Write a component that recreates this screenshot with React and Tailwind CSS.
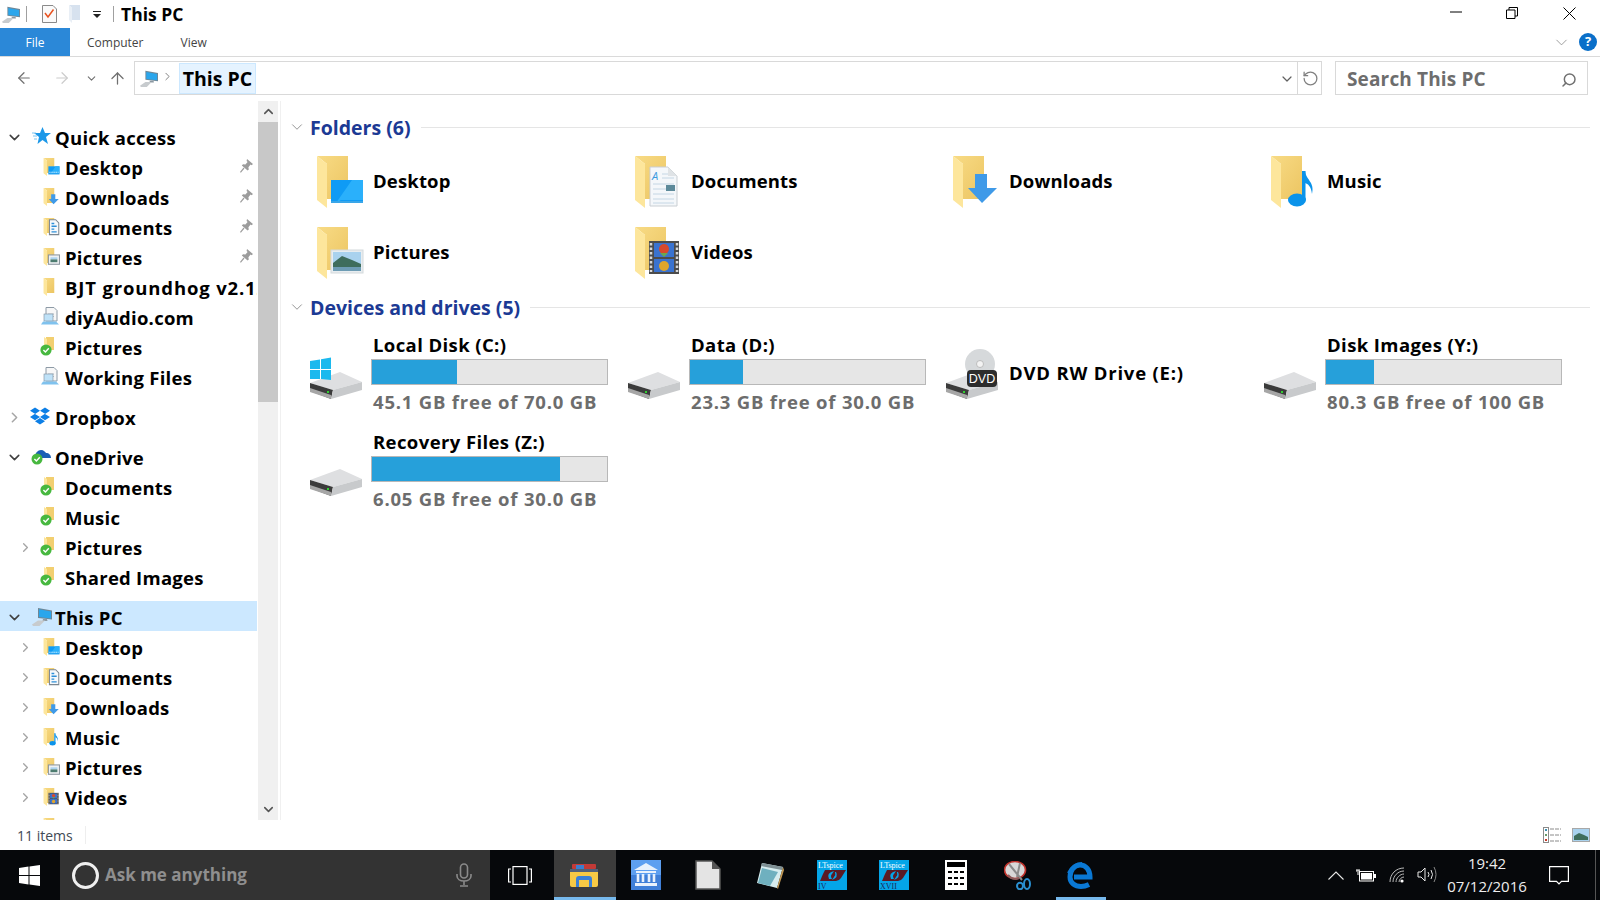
import { ChevronDown, ChevronRight, ChevronUp, ArrowLeft, ArrowRight, ArrowUp, RotateCw, Search } from 'lucide-react';
import { FaDropbox } from 'react-icons/fa';

// --- shared icons ---

function FolderBase() {
  return (
    <>
      <defs>
        <linearGradient id="folderBack" x1="0" y1="0" x2="1" y2="1">
          <stop offset="0" stopColor="#f8db85" />
          <stop offset="1" stopColor="#ecc562" />
        </linearGradient>
      </defs>
      <path d="M1 0H32V43H11V8Z" fill="url(#folderBack)" />
      <path d="M1 0L11 8V52L1 44Z" fill="#fde69c" />
    </>
  );
}

function Overlay({ type, small }) {
  if (type === 'desktop') {
    return (
      <g>
        <rect x="15" y="24" width="32" height="23" fill="#0f9bf5" />
        <path d="M20 47L36 24H47V44H25Z" fill="#2ab0fb" />
        <rect x="15" y="45" width="32" height="2" fill="#3aa6e8" />
        {small && <path d="M18 41H44" stroke="#fff" strokeWidth="3" strokeDasharray="3 3" />}
      </g>
    );
  }
  if (type === 'downloads') {
    return <path d="M23 18H35V32H45L30 47L16 32H23Z" fill="#3f9ae8" />;
  }
  if (type === 'documents') {
    if (small) {
      return (
        <g>
          <path d="M18 5H36L45 14V48H18Z" fill="#f7f9fb" stroke="#7c8790" strokeWidth="3" />
          <path d="M24 16H32M24 24H39M24 32H32M24 40H39" stroke="#2f8fd8" strokeWidth="4" />
        </g>
      );
    }
    return (
      <g>
        <path d="M16 11H34L43 20V50H16Z" fill="#f4f7fa" stroke="#c9ced3" />
        <path d="M34 11V20H43Z" fill="#dfe3e6" />
        <text x="18" y="24" fontSize="11" fontStyle="italic" fill="#3a9ae0">A</text>
        <path d="M28 18H34M28 22H40M19 28H40M19 33H32M19 38H40M19 43H40M19 47H40" stroke="#c4d6e4" strokeWidth="1" />
        <rect x="32" y="29" width="9" height="6" fill="#5d8a9a" />
      </g>
    );
  }
  if (type === 'pictures') {
    if (small) {
      return (
        <g>
          <rect x="15" y="20" width="32" height="27" fill="#eef1f3" stroke="#8a949c" strokeWidth="3" />
          <rect x="21" y="27" width="20" height="6" fill="#a9d2ee" />
          <rect x="21" y="33" width="20" height="8" fill="#4d7c70" />
        </g>
      );
    }
    return (
      <g>
        <rect x="15" y="23" width="32" height="23" fill="#e8edf0" stroke="#d4d9dc" />
        <rect x="17" y="25" width="28" height="19" fill="#a9d2ee" />
        <path d="M17 36L26 29L36 33L45 37V44H17Z" fill="#3e6d5c" />
        <rect x="17" y="40" width="28" height="4" fill="#6d9cb4" />
      </g>
    );
  }
  if (type === 'music') {
    return (
      <g fill="#0b93ea">
        <ellipse cx="27" cy="44" rx="9" ry="6.5" />
        <rect x="32" y="15" width="3.5" height="29" />
        <path d="M35 15C36 24 45 26 42 38C41 30 38 28 35 27Z" />
      </g>
    );
  }
  if (type === 'videos') {
    return (
      <g>
        <rect x="15" y="14" width="30" height="33" fill="#4c4c4c" />
        <rect x="20" y="16" width="20" height="14" fill="#3a73d0" />
        <rect x="20" y="32" width="20" height="13" fill="#3a73d0" />
        <circle cx="30" cy="22" r="5" fill="#d8492c" />
        <path d="M26 26H34L30 30Z" fill="#6aa84f" />
        <circle cx="30" cy="39" r="5" fill="#e0a52c" />
        <path d="M17 16v29M43 16v29" stroke="#d8d8d8" strokeWidth="2.5" strokeDasharray="2.5 2" />
      </g>
    );
  }
  return null;
}

function Folder({ type, w = 48, h = 52, small }) {
  return (
    <svg width={w} height={h} viewBox="0 0 48 52" className="shrink-0">
      <FolderBase />
      <Overlay type={type} small={small} />
    </svg>
  );
}

// small folder with the green "synced" tick of OneDrive
function SyncFolder() {
  return (
    <svg width="18" height="20" viewBox="0 0 18 20" className="ml-[-3px] shrink-0">
      <path d="M6 0H14V13H6Z" fill="#f2cf70" />
      <path d="M4 0L7 2V16L4 14Z" fill="#fde69c" />
      <circle cx="6" cy="13" r="5.6" fill="#47b83f" />
      <path d="M3.4 13L5.4 15L8.8 11.2" fill="none" stroke="#fff" strokeWidth="1.4" />
    </svg>
  );
}

function ShortcutPc() {
  return (
    <svg width="18" height="20" viewBox="0 0 18 20" className="ml-[-2px] shrink-0">
      <path d="M5 0.5H13L16 3.5V14H5Z" fill="#f7f7f7" stroke="#8d9aa6" />
      <path d="M7 7H13M7 9.5H13" stroke="#b8c2ca" strokeWidth="1" />
      <rect x="3" y="7" width="9" height="7" fill="#bfe2f8" stroke="#7c8d9c" strokeWidth="0.6" />
      <path d="M2 14.5H15L18 17.5H0Z" fill="#7fc2ee" />
    </svg>
  );
}

function Computer({ size = 18 }) {
  return (
    <svg width={size} height={size} viewBox="0 0 20 20" className="shrink-0">
      <path d="M6 2L20 4.5V13.5L6 12Z" fill="#6f8796" />
      <path d="M7 3.2L19 5.5V12.6L7 11Z" fill="#2aa6ec" />
      <path d="M11 13H15L15.5 15H10.5Z" fill="#8c98a1" />
      <path d="M0 18.5L6 14.5H13L7.5 20H1Z" fill="#c7cbce" />
    </svg>
  );
}

function Pin() {
  return (
    <svg width="13" height="14" viewBox="0 0 13 14" className="shrink-0">
      <path d="M7 0L13 5L11.6 6.2L10.6 5.6L8.4 8.2L8.8 10.4L7.6 11.4L1.8 6.4L3 5.2L5.4 5.6L7.6 3L6.6 2Z" fill="#9c9c9c" />
      <path d="M4 9L0.4 13.4" stroke="#9c9c9c" strokeWidth="1.2" />
    </svg>
  );
}

function Drive({ win, dvd }) {
  return (
    <svg width="52" height="50" viewBox="0 0 52 50" className="shrink-0">
      <path d="M0 34L30 23L52 33L23 41Z" fill="#dedfe1" />
      <path d="M0 34L23 41L21 50L0 42Z" fill="#3b3b3b" />
      <path d="M0 39L21 46V50L0 43Z" fill="#a6a6a6" />
      <path d="M23 41L52 33V41L21 50Z" fill="#c8cacc" />
      <rect x="17" y="42" width="2" height="2" fill="#30d030" />
      {win && (
        <g fill="#1bb9ee">
          <path d="M0 12L10 10.4V20H0Z" />
          <path d="M11 10.2L21 8.6V20H11Z" />
          <path d="M0 21H10V30H0Z" />
          <path d="M11 21H21V31L11 30Z" />
        </g>
      )}
      {dvd && (
        <g>
          <circle cx="34" cy="15" r="15" fill="#d6d9db" />
          <circle cx="34" cy="15" r="3.5" fill="#f3f3f3" stroke="#aaa" strokeWidth="0.7" />
          <rect x="21" y="21" width="30" height="17" rx="4" fill="#2d2d2d" />
          <text x="36" y="34" textAnchor="middle" fontSize="12.5" fill="#fff" fontFamily="Liberation Sans, sans-serif">DVD</text>
        </g>
      )}
    </svg>
  );
}

// --- navigation pane ---

const quickAccess = [
  { label: 'Desktop', icon: 'desktop', pin: true },
  { label: 'Downloads', icon: 'downloads', pin: true },
  { label: 'Documents', icon: 'documents', pin: true },
  { label: 'Pictures', icon: 'pictures', pin: true },
  { label: 'BJT groundhog v2.12', icon: 'plain', wide: true },
  { label: 'diyAudio.com', icon: 'shortcut' },
  { label: 'Pictures', icon: 'sync' },
  { label: 'Working Files', icon: 'shortcut' },
];

const oneDrive = [
  { label: 'Documents', icon: 'sync' },
  { label: 'Music', icon: 'sync' },
  { label: 'Pictures', icon: 'sync', arrow: true },
  { label: 'Shared Images', icon: 'sync' },
];

const thisPc = [
  { label: 'Desktop', icon: 'desktop', arrow: true },
  { label: 'Documents', icon: 'documents', arrow: true },
  { label: 'Downloads', icon: 'downloads', arrow: true },
  { label: 'Music', icon: 'music', arrow: true },
  { label: 'Pictures', icon: 'pictures', arrow: true },
  { label: 'Videos', icon: 'videos', arrow: true },
  { label: 'Local Disk (C:)', icon: 'plain', arrow: true },
];

function ChildRow({ item }) {
  return (
    <div className="flex h-[30px] items-center">
      <div className="flex w-[43px] shrink-0 justify-end pt-[2px] pr-[10px]">
        {item.arrow && <ChevronRight size={15} strokeWidth={2.2} className="text-[#a6a6a6]" />}
      </div>
      <div className="flex w-[22px] shrink-0 items-center pt-[1px]">
        {item.icon === 'sync' && <SyncFolder />}
        {item.icon === 'shortcut' && <ShortcutPc />}
        {item.icon !== 'sync' && item.icon !== 'shortcut' && (
          <Folder type={item.icon} w={17} h={18} small />
        )}
      </div>
      <span className={`min-w-0 flex-1 overflow-hidden whitespace-nowrap pt-[3px] ${item.wide ? 'tracking-[0.85px]' : ''}`}>{item.label}</span>
      {item.pin && (
        <div className="flex w-[25px] shrink-0 pl-[8px]">
          <Pin />
        </div>
      )}
    </div>
  );
}

function TopRow({ label, open, selected, icon }) {
  return (
    <div className={`flex h-[30px] items-center ${selected ? 'bg-[#cce8ff]' : ''}`}>
      <div className="flex w-[32px] shrink-0 justify-center pt-[2px] pr-[3px]">
        {open ? (
          <ChevronDown size={17} strokeWidth={2.2} className="text-[#404040]" />
        ) : (
          <ChevronRight size={17} strokeWidth={2.2} className="text-[#a6a6a6]" />
        )}
      </div>
      <div className="flex w-[23px] shrink-0 items-center">{icon}</div>
      <span className="whitespace-nowrap pt-[3px]">{label}</span>
    </div>
  );
}

function NavPane() {
  return (
    <div className="flex h-full w-[280px] shrink-0">
      <div className="h-full w-[258px] shrink-0 overflow-hidden pt-[20px] pr-px text-[18.5px] font-bold leading-[30px] tracking-[0.25px] text-black">
        <TopRow
          label="Quick access"
          open
          icon={
            <svg width="19" height="18" viewBox="0 0 19 18">
              <path d="M10.5 0L13 6H19L14 10L16 17L10.5 13L5.5 17L7 10L2 6H8Z" fill="#1c98e8" />
              <path d="M0 6H4M1 9H5M2 12H5" stroke="#7cc5f2" strokeWidth="1" />
            </svg>
          }
        />
        {quickAccess.map((item, i) => <ChildRow key={i} item={item} />)}
        <div className="h-[10px]" />
        <TopRow label="Dropbox" icon={<FaDropbox size={20} className="ml-[-2px] text-[#0d7fe6]" />} />
        <div className="h-[10px]" />
        <TopRow
          label="OneDrive"
          open
          icon={
            <svg width="20" height="18" viewBox="0 0 20 18" className="ml-[-1px]">
              <path d="M4 10C4 6 7 3 10 3C13 3 14 5 15 6C18 6 20 8 20 11H5Z" fill="#1b5fb5" />
              <circle cx="6" cy="12" r="5.5" fill="#47b83f" />
              <path d="M3.4 12L5.4 14L8.8 10.2" fill="none" stroke="#fff" strokeWidth="1.4" />
            </svg>
          }
        />
        {oneDrive.map((item, i) => <ChildRow key={i} item={item} />)}
        <div className="h-[10px]" />
        <TopRow label="This PC" open selected icon={<Computer size={20} />} />
        {thisPc.map((item, i) => <ChildRow key={i} item={item} />)}
      </div>
      <div className="flex h-full w-[20px] shrink-0 flex-col bg-[#f0f0f0]">
        <div className="flex h-[21px] items-center justify-center">
          <ChevronUp size={15} strokeWidth={2.5} className="text-[#555]" />
        </div>
        <div className="h-[280px] bg-[#c8c8c8]" />
        <div className="flex-1" />
        <div className="flex h-[21px] items-center justify-center">
          <ChevronDown size={15} strokeWidth={2.5} className="text-[#555]" />
        </div>
      </div>
    </div>
  );
}

// --- content pane ---

const folders = [
  { label: 'Desktop', icon: 'desktop' },
  { label: 'Documents', icon: 'documents' },
  { label: 'Downloads', icon: 'downloads' },
  { label: 'Music', icon: 'music' },
  { label: 'Pictures', icon: 'pictures' },
  { label: 'Videos', icon: 'videos' },
];

const drives = [
  { name: 'Local Disk (C:)', free: '45.1 GB free of 70.0 GB', used: 36, win: true },
  { name: 'Data (D:)', free: '23.3 GB free of 30.0 GB', used: 22.5 },
  { name: 'DVD RW Drive (E:)', dvd: true },
  { name: 'Disk Images (Y:)', free: '80.3 GB free of 100 GB', used: 20.5 },
  { name: 'Recovery Files (Z:)', free: '6.05 GB free of 30.0 GB', used: 80 },
];

function GroupHeader({ title }) {
  return (
    <div className="flex h-[22px] items-center">
      <ChevronDown size={18} strokeWidth={1.2} className="ml-[-3px] mr-[3px] shrink-0 text-[#8a8a8a]" />
      <span className="ml-[1px] whitespace-nowrap pt-[2px] text-[19.5px] font-bold text-[#1c3a94]">{title}</span>
      <div className="ml-[10px] h-px flex-1 bg-[#e5e5e5]" />
    </div>
  );
}

function DriveTile({ drive }) {
  return (
    <div className="flex h-[97px] items-center">
      <Drive win={drive.win} dvd={drive.dvd} />
      {drive.dvd ? (
        <span className="ml-[11px] mb-[2px] whitespace-nowrap text-[18.5px] font-bold tracking-[0.8px] text-black">{drive.name}</span>
      ) : (
        <div className="ml-[9px] flex w-[237px] flex-col">
          <span className="h-[22px] pl-[2px] text-[18.5px] font-bold leading-[22px] tracking-[0.4px] text-black">{drive.name}</span>
          <div className="mt-[3px] h-[26px] border border-[#b8b8b8] bg-[#e6e6e6]">
            <div className="h-full bg-[#26a0da]" style={{ width: `${drive.used}%` }} />
          </div>
          <span className="mt-[6px] h-[22px] whitespace-nowrap pl-[2px] text-[18.5px] font-bold leading-[22px] tracking-[0.8px] text-[#6d6d6d]">{drive.free}</span>
        </div>
      )}
    </div>
  );
}

function ContentPane() {
  return (
    <div className="h-full flex-1 border-l border-[#f0f0f0] pt-[15px] pr-[10px] pl-[10px]">
      <GroupHeader title="Folders (6)" />
      <div className="mt-[8px] ml-[19px] grid grid-cols-[318px_318px_318px_318px] grid-rows-[71px_71px]">
        {folders.map((f) => (
          <div key={f.label} className="flex items-center pl-[6px]">
            <Folder type={f.icon} />
            <span className="ml-[9px] mb-[2px] text-[18.5px] font-bold tracking-[0.15px] text-black">{f.label}</span>
          </div>
        ))}
      </div>
      <div className="mt-[8px]">
        <GroupHeader title="Devices and drives (5)" />
      </div>
      <div className="mt-[7px] ml-[19px] grid grid-cols-[318px_318px_318px_318px]">
        {drives.map((d) => <DriveTile key={d.name} drive={d} />)}
      </div>
    </div>
  );
}

// --- taskbar ---

function WinLogo() {
  return (
    <svg width="21" height="21" viewBox="0 0 21 21">
      <path d="M0 3L9.5 1.6V10H0Z M10.5 1.5L21 0V10H10.5Z M0 11H9.5V19.4L0 18Z M10.5 11H21V21L10.5 19.5Z" fill="#fff" />
    </svg>
  );
}

function TaskItem({ active, open, children }) {
  return (
    <div className={`relative flex h-full w-[62px] shrink-0 items-center justify-center pr-[2px] ${active ? 'bg-[#3c3c3c]' : ''}`}>
      {children}
      {open && <div className="absolute right-[6px] bottom-0 left-[6px] h-[3px] bg-[#76b9ed]" />}
      {active && <div className="absolute right-0 bottom-0 left-0 h-[3px] bg-[#76b9ed]" />}
    </div>
  );
}

function LtSpice({ roman }) {
  return (
    <svg width="30" height="30" viewBox="0 0 30 30">
      <rect width="30" height="30" fill="#04a5e8" />
      <path d="M8 10H29L24 18Q22 21 19 21H3L6 14Z" fill="#5a1a24" />
      <path d="M12 19Q9 13 17 11L15 14Q13 16 15 19Z M19 12Q22 17 15 20L17 17Q19 15 18 12Z" fill="#04a5e8" />
      <text x="1" y="8" fontSize="8" fill="#fff" fontFamily="Liberation Serif, serif">LTspice</text>
      <text x="1" y="29" fontSize="8" fill="#1b2a5a" fontFamily="Liberation Serif, serif">{roman}</text>
    </svg>
  );
}

function Taskbar() {
  return (
    <div className="flex h-[50px] shrink-0 items-center bg-[#06080b] text-white">
      <div className="flex h-full w-[60px] items-center justify-center pr-[2px]">
        <WinLogo />
      </div>
      <div className="flex h-full w-[430px] items-center bg-[#333333]">
        <div className="ml-[12px] h-[27px] w-[27px] shrink-0 rounded-full border-[3px] border-[#efefef]" />
        <span className="ml-[6px] text-[17px] font-bold text-[#8f8f8f]">Ask me anything</span>
        <svg width="16" height="24" viewBox="0 0 16 24" className="ml-auto mr-[18px]" fill="none" stroke="#8a8a8a" strokeWidth="1.6">
          <rect x="4.5" y="1" width="7" height="14" rx="3.5" />
          <path d="M1 11V13C1 16 4 18 8 18C12 18 15 16 15 13V11M8 18V22M4 23H12" />
        </svg>
      </div>
      <div className="flex h-full w-[64px] items-center justify-center pr-[4px]">
        <svg width="24" height="19" viewBox="0 0 24 19" fill="none" stroke="#fff" strokeWidth="1.2">
          <rect x="5" y="0.6" width="14" height="17.8" />
          <path d="M3 3H0.6V16H3M21 3H23.4V16H21" />
        </svg>
      </div>
      <TaskItem active>
        <svg width="28" height="23" viewBox="0 0 28 23">
          <rect x="2" y="0" width="24" height="5" rx="1" fill="#c23a37" />
          <rect x="6" y="1" width="8" height="4" fill="#3a7fd0" />
          <rect x="0" y="5" width="28" height="4" fill="#50607a" />
          <path d="M0 8H28V21Q28 23 26 23H2Q0 23 0 21Z" fill="#f6c945" />
          <path d="M6 23V15Q6 12 9 12H19Q22 12 22 15V23H19V16H9V23Z" fill="#3a80d6" />
        </svg>
      </TaskItem>
      <TaskItem>
        <svg width="30" height="30" viewBox="0 0 30 30">
          <rect width="30" height="15" fill="#5d9ff0" />
          <rect y="15" width="30" height="15" fill="#3f7fd8" />
          <path d="M15 3L27 10H3Z M5 11H25V13H5Z M4 23H26V26H4Z" fill="#e8f1fc" />
          <path d="M7 14V22M12 14V22M18 14V22M23 14V22" stroke="#e8f1fc" strokeWidth="2.6" />
        </svg>
      </TaskItem>
      <TaskItem>
        <svg width="26" height="30" viewBox="0 0 26 30">
          <path d="M1 1H17L25 9V29H1Z" fill="#e4e4e4" stroke="#555" strokeWidth="1.5" />
          <path d="M17 1L25 9H17Z" fill="#555" />
        </svg>
      </TaskItem>
      <TaskItem>
        <svg width="28" height="30" viewBox="0 0 28 30">
          <path d="M6 3L27 7L21 28L1 23Z" fill="#d6ecef" />
          <path d="M6 3L27 7L26 10L5 6Z" fill="#7e8f94" />
          <path d="M6 8L22 12L14 26L2 23Z" fill="#6fb0bf" />
          <path d="M27 7L28 10L22 29L21 28Z" fill="#c49a55" />
        </svg>
      </TaskItem>
      <TaskItem><LtSpice roman="IV" /></TaskItem>
      <TaskItem><LtSpice roman="XVII" /></TaskItem>
      <TaskItem>
        <svg width="22" height="30" viewBox="0 0 22 30">
          <rect width="22" height="30" fill="#fff" />
          <rect x="2" y="2" width="18" height="5" fill="#000" />
          <path d="M3 11h4v2H3zM9 11h4v2H9zM15 11h4v2h-4zM3 17h4v2H3zM9 17h4v2H9zM15 17h4v2h-4zM3 23h4v2H3zM9 23h4v2H9zM15 23h4v2h-4z" fill="#000" />
        </svg>
      </TaskItem>
      <TaskItem>
        <svg width="28" height="29" viewBox="0 0 28 29" fill="none">
          <ellipse cx="11" cy="9" rx="10.5" ry="8.5" fill="#d8d8d8" stroke="#c0322c" strokeWidth="1.6" />
          <path d="M5 3L18 19M16 2L13 16" stroke="#8a8a8a" strokeWidth="2" />
          <path d="M4 14Q9 20 15 17" stroke="#8a5a5a" strokeWidth="2" />
          <ellipse cx="23" cy="23" rx="3" ry="5" stroke="#2a8fd0" strokeWidth="2" />
          <ellipse cx="16" cy="25" rx="3" ry="3.2" stroke="#2a8fd0" strokeWidth="2" />
        </svg>
      </TaskItem>
      <TaskItem open>
        <svg width="26" height="27" viewBox="0 0 26 27" fill="none" stroke="#0a78d4">
          <path d="M7 15H23C23 8 19 3 13 3C7 3 3 9 3 15C3 21 8 24.5 14 24.5C17.5 24.5 20 23.5 22 22.5" strokeWidth="5" />
          <path d="M1 11C4 5 9 1 15 1" strokeWidth="2" />
        </svg>
      </TaskItem>

      <div className="ml-auto flex h-full items-center">
        <svg width="16" height="9" viewBox="0 0 16 9" fill="none" stroke="#e8e8e8" strokeWidth="1.1" className="mr-[12px]">
          <path d="M0.5 8.5L8 1L15.5 8.5" />
        </svg>
        <svg width="20" height="13" viewBox="0 0 20 13" className="mr-[13px]">
          <rect x="3.5" y="2.5" width="14" height="9.5" fill="#111" stroke="#fff" />
          <rect x="5" y="4" width="11" height="6.5" fill="#fff" />
          <rect x="18" y="5" width="2" height="4" fill="#fff" />
          <path d="M0 2H4M1 0V2M3 0V2M2 3V6" stroke="#fff" strokeWidth="1" />
        </svg>
        <svg width="16" height="16" viewBox="0 0 16 16" fill="none" stroke="#bbb" strokeWidth="1" className="mr-[12px]">
          <path d="M1 15C1 7 7 1 15 1M4 15C4 9 9 4 15 4M7 15C7 11 11 7 15 7M10 15C10 12.5 12.5 10 15 10" />
          <circle cx="13" cy="14" r="1.6" fill="#fff" stroke="none" />
        </svg>
        <svg width="20" height="18" viewBox="0 0 20 18" fill="none" stroke="#e8e8e8" strokeWidth="1" className="mr-[15px]">
          <path d="M1 6H4L8 2V15L4 11H1Z" />
          <path d="M11 6Q13 8.5 11 11M14 4Q17 8.5 14 13" />
          <path d="M17 1Q21 8.5 17 16" stroke="#888" />
        </svg>
        <div className="flex w-[70px] flex-col items-center text-[15px] leading-[23px] text-[#eeeeee]">
          <span>19:42</span>
          <span className="whitespace-nowrap">07/12/2016</span>
        </div>
        <svg width="20" height="19" viewBox="0 0 20 19" fill="none" stroke="#fff" strokeWidth="1.2" className="ml-[27px] mr-[26px]">
          <path d="M0.6 0.6H19.4V15.4H12.5L10 18L7.5 15.4H0.6Z" />
        </svg>
        <div className="mr-[4px] h-full w-px bg-[#555]" />
      </div>
    </div>
  );
}

export default function App() {
  return (
    <div className="flex h-[900px] w-[1600px] flex-col overflow-hidden bg-white font-['Open_Sans','Noto_Sans',sans-serif]">
      {/* title bar */}
      <div className="flex h-[28px] shrink-0 items-center">
        <div className="ml-[2px]"><Computer size={18} /></div>
        <div className="ml-[6px] h-[16px] w-px bg-[#a0a0a0]" />
        <svg width="15" height="18" viewBox="0 0 15 18" className="ml-[15px]">
          <path d="M0.5 0.5H11L14.5 4V17.5H0.5Z" fill="#fafafa" stroke="#8a8a8a" />
          <path d="M3 8L6 12L11.5 4.5" fill="none" stroke="#e8521f" strokeWidth="1.5" />
        </svg>
        <svg width="13" height="18" viewBox="0 0 13 18" className="ml-[11px]">
          <path d="M1 0H12V15H4V3Z" fill="#d7e2ef" />
          <path d="M1 0L4 3V18L1 15Z" fill="#e9eff6" />
        </svg>
        <svg width="8" height="7" viewBox="0 0 8 7" className="ml-[12px]">
          <path d="M0 0H8V1H0Z M0 3H8L4 7Z" fill="#222" />
        </svg>
        <div className="ml-[12px] h-[16px] w-px bg-[#a0a0a0]" />
        <span className="ml-[7px] text-[17.5px] font-bold text-black">This PC</span>
        <svg width="12" height="2" viewBox="0 0 12 2" className="ml-auto mb-[4px]">
          <path d="M0 1H12" stroke="#000" strokeWidth="1" />
        </svg>
        <svg width="12" height="12" viewBox="0 0 12 12" fill="none" stroke="#000" strokeWidth="1" className="ml-[44px] mb-[2px]">
          <path d="M0.5 3H9V11.5H0.5Z M3 3V0.5H11.5V9H9" />
        </svg>
        <svg width="13" height="13" viewBox="0 0 13 13" fill="none" stroke="#000" strokeWidth="1" className="ml-[45px] mr-[24px] mb-[2px]">
          <path d="M0.5 0.5L12.5 12.5M12.5 0.5L0.5 12.5" />
        </svg>
      </div>

      {/* ribbon tabs */}
      <div className="flex h-[29px] shrink-0 items-stretch border-b border-[#dadada] text-[12px] text-[#444]">
        <div className="flex h-[28px] w-[70px] items-center justify-center bg-[#2b88d8] pt-[1px] text-white">File</div>
        <div className="ml-[17px] flex items-center pt-[2px]">Computer</div>
        <div className="ml-[37px] flex items-center pt-[2px]">View</div>
        <div className="ml-auto flex items-center">
          <ChevronDown size={19} strokeWidth={1.1} className="text-[#909090]" />
          <div className="mx-[3px] ml-[8px] flex h-[18px] w-[18px] items-center justify-center rounded-full bg-[#0a6fc9] text-[13px] font-bold text-white">?</div>
        </div>
      </div>

      {/* address row */}
      <div className="flex h-[44px] shrink-0 items-start pt-[4px]">
        <div className="flex h-[34px] w-[134px] shrink-0 items-center">
          <ArrowLeft size={18} strokeWidth={1.6} className="ml-[15px] text-[#707070]" />
          <ArrowRight size={18} strokeWidth={1.6} className="ml-[20px] text-[#cccccc]" />
          <ChevronDown size={13} strokeWidth={2} className="ml-[14px] text-[#707070]" />
          <ArrowUp size={19} strokeWidth={1.6} className="ml-[10px] text-[#707070]" />
        </div>
        <div className="flex h-[34px] w-[1188px] shrink-0 items-center border border-[#d9d9d9]">
          <div className="ml-[5px]"><Computer size={18} /></div>
          <ChevronRight size={13} strokeWidth={1.6} className="ml-[3px] mb-[3px] text-[#707070]" />
          <div className="ml-[5px] flex h-[31px] w-[77px] items-center justify-center border border-[#cce8ff] bg-[#e5f3ff] pt-[1px] text-[19.5px] font-bold text-black">This PC</div>
          <ChevronDown size={16} strokeWidth={1.8} className="ml-auto mr-[2px] mt-[2px] text-[#606060]" />
          <div className="flex h-full w-[24px] items-center justify-center border-l border-[#d9d9d9] pl-[2px]">
            <RotateCw size={17} strokeWidth={1.8} className="-scale-x-100 text-[#808080]" />
          </div>
        </div>
        <div className="ml-[13px] flex h-[34px] w-[253px] shrink-0 items-center border border-[#d9d9d9] pt-[3px] pl-[11px] text-[19px] font-bold tracking-[0.15px] text-[#6d6d6d]">
          Search This PC
          <Search size={16} strokeWidth={2.2} className="ml-auto mr-[10px] -scale-x-100 text-[#707070]" />
        </div>
      </div>

      {/* main */}
      <div className="flex h-[719px] shrink-0">
        <NavPane />
        <ContentPane />
      </div>

      {/* status bar */}
      <div className="flex h-[30px] shrink-0 items-center text-[14px] text-[#3f4a55]">
        <span className="ml-[17px] w-[68px]">11 items</span>
        <div className="h-[18px] w-px bg-[#eeeeee]" />
        <svg width="19" height="16" viewBox="0 0 19 16" className="ml-auto" fill="none">
          <rect x="0.5" y="0.5" width="5" height="15" stroke="#8a8a8a" />
          <rect x="2" y="2" width="2" height="2" fill="#3a8fb0" />
          <rect x="2" y="7" width="2" height="2" fill="#6a9a6a" />
          <rect x="2" y="12" width="2" height="2" fill="#c83a2a" />
          <path d="M7 2H18M7 8H18M7 14H18" stroke="#8a8a8a" strokeDasharray="4 1" />
        </svg>
        <svg width="18" height="14" viewBox="0 0 18 14" className="ml-[10px] mr-[10px]">
          <rect x="0.5" y="0.5" width="17" height="13" fill="#a9d2ee" stroke="#a8a8a8" />
          <path d="M2 8L7 5L12 7L16 9V12H2Z" fill="#3e6d5c" />
        </svg>
      </div>

      <Taskbar />
    </div>
  );
}
